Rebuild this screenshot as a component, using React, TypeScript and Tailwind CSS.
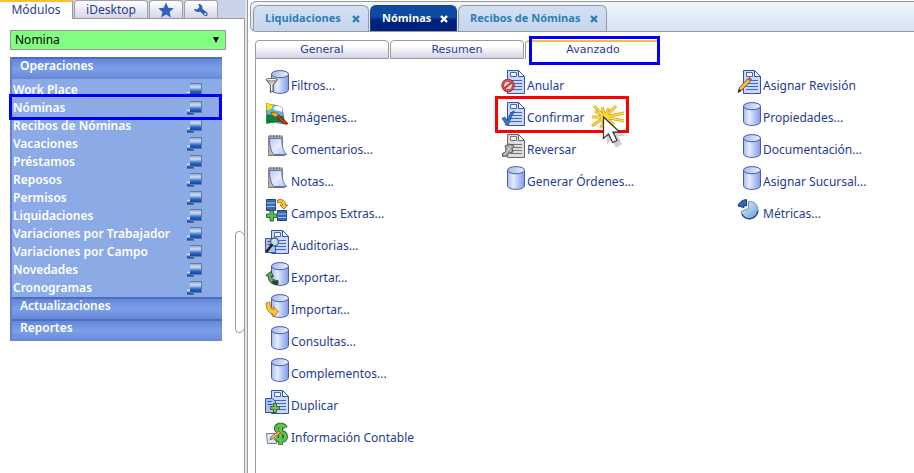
import type { ReactNode } from "react";

type IconProps = { children: ReactNode };

function Glyph({ children }: IconProps) {
  return (
    <svg viewBox="0 0 24 24" className="size-6 shrink-0" aria-hidden="true">
      {children}
    </svg>
  );
}

function Cylinder() {
  return (
    <>
      <path d="M6.500 4v15.500c0 2.200 3.800 3.900 8.500 3.900s8.500-1.700 8.500-3.900V4z" fill="url(#cyl)" stroke="#4a5f9f" />
      <ellipse cx="15" cy="4.200" rx="8.500" ry="3.600" fill="url(#lid)" stroke="#4a5f9f" />
    </>
  );
}

function Page({ gray = false }: { gray?: boolean }) {
  const edge = gray ? "#666" : "#3355a8";
  const line = gray ? "#777" : "#4468b8";
  return (
    <>
      <path d="M6.500.5h11l6 6v17h-17z" fill={gray ? "#dcdcdc" : "#c9d8fb"} stroke={edge} />
      <path d="M9.500 2.500h6v4h-6z" fill={gray ? "#eee" : "#f5f8ff"} stroke={line} />
      <path d="M17.500.5v6h6z" fill="#fff" stroke={edge} />
      <path d="M9 10.500h12M9 13.500h12M9 16.500h12M9 19.500h12" stroke={line} />
    </>
  );
}

function SmallPage() {
  return (
    <>
      <path d="M.5 8.500h7l3 3v11H.5z" fill="#a9c1f4" stroke="#3355a8" />
      <path d="M2.500 11.500h4M2.500 14.500h5" stroke="#3355a8" />
    </>
  );
}

function Pad() {
  return (
    <>
      <path d="M3.500 2h14v19.500h-14z" fill="#b9b7aa" stroke="#8a8878" />
      <path d="M4.500 4.500h12.300c0 7 1 12 4.700 16H8.800c-3-3.500-4.300-9-4.300-16z" fill="url(#sheet)" stroke="#5c72b4" />
      <path d="M5.500 1v2.500M8.500 1v2.500M11.500 1v2.500M14.500 1v2.500" stroke="#77725d" strokeWidth="1.200" />
      <path d="M4 21.500h16" stroke="#77756a" />
    </>
  );
}

const pictures: Record<string, ReactNode> = {
  cylinder: <Cylinder />,
  filter: (
    <>
      <Cylinder />
      <path d="M1 9.500c2-1 9.500-1 11.500 0l-4.300 5.500v6l-2.800 1.500V15z" fill="#cfcfcf" stroke="#4c4c4c" />
      <ellipse cx="6.700" cy="9.700" rx="5.500" ry="1.300" fill="#fff" stroke="#555" strokeWidth=".8" />
      <path d="M6.500 14.500v6" stroke="#fff" />
    </>
  ),
  image: (
    <>
      <path d="M1.500 1.500l6 1.500 5 .5 4.500 2 1.500 9 1 7.500-6-1-5-1-7 1z" fill="#5cb3ee" stroke="#666" strokeWidth=".8" />
      <path d="M1.500 1.500l6 1.500c1 3-3 5.500-6 5z" fill="#f5e400" />
      <path d="M9 5l3-1.500 5 2 .5 4c-3 .5-4-1.500-6-1-2 .5-3.500-1-2.500-3.500z" fill="#fff" />
      <path d="M1.500 13c5-2 10 3 17 1l1 8c-6-4-11-1-18-.2z" fill="#08823b" />
      <path d="M11.500 13.500l2-1L23 21.500l-1.500 1c-4-1-8-4.500-10-9z" fill="#cf321c" stroke="#4f160d" strokeWidth=".7" />
      <path d="M6 10.500l4.500-.5 3 3-2 2c-2.500.3-4-1-5.500-4.500z" fill="#f4a91b" stroke="#744500" strokeWidth=".8" />
    </>
  ),
  pad: <Pad />,
  fields: (
    <>
      <path d="M1.500 1.500h9v11h-9zM12.500 12.500h9v10h-9z" fill="#3a68ba" stroke="#1e3f80" />
      <path d="M1.500 5h9M1.500 8.500h9M12.500 16h9M12.500 19.500h9" stroke="#9cc1f0" />
      <path d="M12.500 2c5-1.500 8 1 8 5h2l-3.500 4L15 7h2.500c0-2-2-3-5-2z" fill="#ffc82e" stroke="#a16400" strokeWidth=".9" />
      <path d="M5 12.500h3.500V16H12v3.500H8.500V23H5v-3.500H1.500V16H5z" fill="#60b65b" stroke="#2f6c35" />
    </>
  ),
  audit: (
    <>
      <Page />
      <SmallPage />
      <circle cx="9.500" cy="12" r="4" fill="#b2e0f2" stroke="#5c6368" strokeWidth="1.400" />
      <path d="M6.800 15l-4.800 6" stroke="#25221f" strokeWidth="2.600" strokeLinecap="round" />
      <path d="M8 11l2-1.500" stroke="#fff" />
    </>
  ),
  exporting: (
    <>
      <Cylinder />
      <path d="M.8 13.500l5.200-4 2.500 5.300-2.300-.6c.5 3 3 4.300 6.800 4.300v4C7 22.800 3.200 20 3.200 14z" fill="#6aaa66" stroke="#1c4929" strokeWidth=".9" />
      <path d="M8.500 18c1 .7 2.500 1 4.500 1v3.200c-3 .3-5-.5-6.500-2z" fill="#214b2b" />
    </>
  ),
  importing: (
    <>
      <Cylinder />
      <path d="M1 9l4-1c0 5 1.500 7.500 4 7.500L8.500 12.500l5 5.500-5.500 5-.3-3.200C3.500 19 1 15 1 9z" fill="#ffc531" stroke="#b87412" strokeWidth=".9" />
    </>
  ),
  duplicate: (
    <>
      <Page />
      <SmallPage />
      <path d="M8.500 13.500h3v3h3v3h-3v3h-3v-3h-3v-3h3z" fill="#79bf5a" stroke="#315f2d" strokeWidth=".9" />
    </>
  ),
  accounting: (
    <>
      <path d="M1.500 11.500h11l-1 10h-9z" fill="#dce8fa" stroke="#6680ac" />
      <path
        d="M20.500 6c-1-2-3-2.800-5-2.800-4.500 0-5.500 4.500-2 6 4 1.700 7 1.500 7 5.500 0 4.500-7 5-9.500 1M15.500.8v22"
        fill="none"
        stroke="#1c672a"
        strokeWidth="4.800"
      />
      <path
        d="M20.500 6c-1-2-3-2.800-5-2.800-4.500 0-5.500 4.500-2 6 4 1.700 7 1.500 7 5.500 0 4.500-7 5-9.500 1M15.500 1.500v20.500"
        fill="none"
        stroke="#62bf50"
        strokeWidth="3"
      />
      <path d="M5 18l1-3 8-6 1.500 2-8 6z" fill="#f6bd50" stroke="#8b4f12" strokeWidth=".8" />
    </>
  ),
  cancel: (
    <>
      <Page />
      <circle cx="7" cy="15.500" r="5.300" fill="#e9d2da" stroke="#8f1c1d" strokeWidth="2.800" />
      <circle cx="7" cy="15.500" r="5.300" fill="none" stroke="#d85550" strokeWidth="1.700" />
      <path d="M3.500 18.500l7-6" stroke="#c83a36" strokeWidth="2" />
    </>
  ),
  confirm: (
    <>
      <Page />
      <path d="M1 16.500l2.800-1.300 2.400 3.300c1.500-4.500 3.300-7.500 6.300-9.500l1 .8c-3 3.700-4.500 7.700-6 12.700l-2.500.8C4 20.500 3 18.500 1 16.500z" fill="#3d76d2" stroke="#1d458f" strokeWidth=".9" />
    </>
  ),
  reverse: (
    <>
      <Page gray />
      <path d="M4 12l4-2 4 1 1 2-2 2 1 3-4 1-2 3-4.500.5v-3l3-1.500.5-3z" fill="#a3a3a3" stroke="#5a5a5a" />
      <path d="M3 21l7-9M5.500 13l4.500 4" stroke="#ddd" />
    </>
  ),
  review: (
    <>
      <Page />
      <path d="M1 22.500l1.500-5L11 8.500l2.500 2.500L5 20z" fill="#f5bd54" stroke="#694218" strokeWidth=".9" />
      <path d="M11 8.500l1.500-1.600 2.400 2.500-1.400 1.600z" fill="#c74a3c" />
      <path d="M1 22.500l1-3.500 2.300 2z" fill="#222" />
    </>
  ),
  chart: (
    <>
      <path d="M11.500 3.500c6-.5 9.500 3.500 9.500 8.500 0 5.300-4 9-8.500 9-4.500 0-7.500-3-8.500-7.500l7.500-3z" fill="url(#pie)" stroke="#5379ae" strokeWidth=".8" />
      <path d="M5 16c1.500 3.200 4 4.700 7.500 4.700 4.300 0 7.700-3.200 8.200-7.700" stroke="#2c5288" strokeWidth="1.600" fill="none" />
      <path d="M1 8c1-3.500 4-6 8.500-6.500v6.500L7 7.500v2z" fill="#3567b8" stroke="#183878" />
    </>
  ),
};

function SharedPaints() {
  return (
    <svg className="absolute size-0" aria-hidden="true">
      <defs>
        <linearGradient id="cyl">
          <stop stopColor="#a3bbf5" />
          <stop offset=".35" stopColor="#e4ebff" />
          <stop offset="1" stopColor="#7f9ce8" />
        </linearGradient>
        <linearGradient id="lid">
          <stop stopColor="#a8bbee" />
          <stop offset="1" stopColor="#e6edff" />
        </linearGradient>
        <linearGradient id="sheet" x2="1" y2="1">
          <stop stopColor="#b4c8f8" />
          <stop offset=".5" stopColor="#e6eeff" />
          <stop offset="1" stopColor="#aac1f8" />
        </linearGradient>
        <linearGradient id="pie" x2="1" y2="1">
          <stop stopColor="#e4f1ff" />
          <stop offset="1" stopColor="#6b9cd8" />
        </linearGradient>
        <linearGradient id="win" x2="0" y2="1">
          <stop stopColor="#8fabd2" />
          <stop offset=".3" stopColor="#d2e0f3" />
          <stop offset=".7" stopColor="#2d68bd" />
          <stop offset="1" stopColor="#0b48b0" />
        </linearGradient>
      </defs>
    </svg>
  );
}

function WindowIcon() {
  return (
    <svg viewBox="0 0 15 14" className="h-[14px] w-[15px] shrink-0" aria-hidden="true">
      <path d="M0 8h7v6H0z" fill="#55719c" />
      <path d="M0 8h6v5H0z" fill="url(#win)" />
      <path d="M3 0h12v12H3z" fill="#5f7ba8" />
      <path d="M3 1h11v10H3z" fill="url(#win)" />
    </svg>
  );
}

const modules = [
  "Work Place",
  "Nóminas",
  "Recibos de Nóminas",
  "Vacaciones",
  "Préstamos",
  "Reposos",
  "Permisos",
  "Liquidaciones",
  "Variaciones por Trabajador",
  "Variaciones por Campo",
  "Novedades",
  "Cronogramas",
];

const actions: [string, string][][] = [
  [
    ["Filtros...", "filter"],
    ["Imágenes...", "image"],
    ["Comentarios...", "pad"],
    ["Notas...", "pad"],
    ["Campos Extras...", "fields"],
    ["Auditorias...", "audit"],
    ["Exportar...", "exporting"],
    ["Importar...", "importing"],
    ["Consultas...", "cylinder"],
    ["Complementos...", "cylinder"],
    ["Duplicar", "duplicate"],
    ["Información Contable", "accounting"],
  ],
  [
    ["Anular", "cancel"],
    ["Confirmar", "confirm"],
    ["Reversar", "reverse"],
    ["Generar Órdenes...", "cylinder"],
  ],
  [
    ["Asignar Revisión", "review"],
    ["Propiedades...", "cylinder"],
    ["Documentación...", "cylinder"],
    ["Asignar Sucursal...", "cylinder"],
    ["Métricas...", "chart"],
  ],
];

const sideTab =
  "flex h-[18px] items-center justify-center rounded-t border border-b-0 border-[#a0a0aa] bg-linear-to-b from-white to-[#d5d5e8]";
const sectionHead =
  "flex h-[22px] w-full items-center border-t-2 border-[#4c6dc0] bg-linear-to-b from-[#6487d8] via-[#7c9fe9] to-[#6788d8] pb-[6px] pl-2 text-left text-[12px] font-semibold";

function Sidebar() {
  return (
    <aside className="relative flex w-[245px] shrink-0 flex-col bg-[#c8d3e8]">
      <nav className="flex h-[19px] text-[12px] text-[#27408b]">
        <button className="w-[73px] border-t-2 border-r border-t-[#ffbe32] border-r-[#999] bg-white pb-[2px] leading-4">
          Módulos
        </button>
        <div className="flex grow gap-px border-b border-[#999] pl-px">
          <button className={sideTab + " w-[74px]"}>iDesktop</button>
          <button className={sideTab + " w-[34px]"} aria-label="Favoritos">
            <svg viewBox="0 0 16 16" className="size-4">
              <path d="M8 .5l2.300 5.200 5.500.5-4.200 3.700 1.300 5.600L8 12.500l-4.900 3 1.300-5.600L.2 6.200l5.500-.5z" fill="#2f62b8" />
            </svg>
          </button>
          <button className={sideTab + " w-[34px]"} aria-label="Herramientas">
            <svg viewBox="0 0 16 16" className="size-4">
              <path d="M5 2c3-.5 5 2 4.300 4.700l4.200 3.300c2.700 2 .3 5.500-2.300 3.600L7 9.500C4.500 11 1.500 9.500 1 7l3.300.5L6.500 5z" fill="#2b5fb6" />
              <circle cx="12.300" cy="12" r="1" fill="#fff" />
            </svg>
          </button>
        </div>
      </nav>
      <div className="grow border-r border-[#999] bg-white pt-[11px] pl-[10px]">
        <div className="relative w-[216px]">
          <select
            aria-label="Módulo"
            className="block h-5 w-full appearance-none border border-[#999] bg-[#80ff80] pl-1 text-[12px] leading-4 text-black"
          >
            <option>Nomina</option>
          </select>
          <svg viewBox="0 0 6 6" className="pointer-events-none absolute top-[7px] right-[7px] size-[6px]">
            <path d="M0 0h6L3 6z" />
          </svg>
        </div>
        <div className="mt-[7px] w-[212px] border-l-2 border-[#6080d0] bg-[#8caae6] text-white">
          <button className={sectionHead}>Operaciones</button>
          <ul className="pt-[2px]">
            {modules.map((name) => (
              <li key={name} className="relative">
                <a href="#" className="flex h-[18px] items-center justify-between pr-5 pl-px text-[12px] font-semibold">
                  {name}
                  <WindowIcon />
                </a>
                {name === "Nóminas" && (
                  <span className="pointer-events-none absolute -top-[5px] right-0 -bottom-[3px] -left-[3px] z-10 border-3 border-[#0000ff]" />
                )}
              </li>
            ))}
          </ul>
          <button className={sectionHead}>Actualizaciones</button>
          <button className={sectionHead}>Reportes</button>
        </div>
      </div>
      <span className="absolute top-[231px] right-0 h-[102px] w-[10px] rounded-l-sm rounded-r-md border border-[#999] bg-white" />
    </aside>
  );
}

const docTab =
  "flex h-[26px] items-center justify-between rounded-t-md border border-b-0 pr-2 pl-[11px] font-['Open_Sans',sans-serif] text-[11px] font-bold";

function DocumentTabs() {
  const tabs = [
    { name: "Liquidaciones", style: "w-[116px]", active: false },
    { name: "Nóminas", style: "w-[87px]", active: true },
    { name: "Recibos de Nóminas", style: "w-[149px]", active: false },
  ];
  return (
    <nav className="mt-px flex h-[31px] items-end gap-px rounded-l-md border border-r-0 border-[#999] bg-linear-to-b from-[#eff5fa] to-[#d6e2f4] pl-[2px]">
      {tabs.map((tab) => (
        <button
          key={tab.name}
          className={
            docTab +
            " " +
            tab.style +
            (tab.active
              ? " border-[#103f91] bg-linear-to-b from-[#1049a0] from-45% to-[#00227f] to-55% text-white"
              : " border-[#999] bg-linear-to-b from-[#d2e0f2] to-[#c6d6ee] text-[#2e7db2]")
          }
        >
          {tab.name}
          <svg viewBox="0 0 8 8" className="size-2">
            <path d="M1 1l6 6M7 1L1 7" stroke="currentColor" strokeWidth="2.400" />
          </svg>
        </button>
      ))}
    </nav>
  );
}

function ClickPointer() {
  const rays = "M15 13L4 2M15 13L12 3M15 13L19 4M15 13L26 2M15 13L34 9M15 13L34 17M15 13L2 13M15 13L2 22M15 13L5 7M15 13L11 24M15 13L24 21";
  return (
    <svg viewBox="0 0 40 46" className="pointer-events-none absolute top-[2px] left-[89px] h-[46px] w-10" aria-hidden="true">
      <path d={rays} stroke="#dfa41c" strokeWidth="3" />
      <path d={rays} stroke="#f8de4c" strokeWidth="1.400" />
      <circle cx="15" cy="13" r="4" fill="#f8d840" />
      <path d="M17 19v21l5-4 4 8 6-4-4-8h7z" fill="#777" opacity=".35" />
      <path d="M13.500 13v21.500l5-4.500 4.200 8.500 4.300-2-4-8.500h6.500z" fill="#fff" stroke="#333" strokeWidth="1.200" />
    </svg>
  );
}

const innerTab = "rounded-t border border-[#999] bg-linear-to-b from-white from-30% to-[#d3d3e5]";

export default function App() {
  return (
    <div className="flex min-h-screen overflow-hidden bg-[#dfe7f3] font-['Noto_Sans',sans-serif] text-[12px] text-[#1f3c91]">
      <SharedPaints />
      <Sidebar />
      <main className="ml-[2px] min-w-0 grow border-l border-[#999] bg-white">
        <div className="pl-[2px]">
          <DocumentTabs />
          <div className="ml-[5px] pt-2">
            <nav className="flex h-[19px] gap-px font-['DejaVu_Sans',sans-serif] text-[11px] leading-4">
              <button className={innerTab + " w-[134px]"}>General</button>
              <button className={innerTab + " w-[134px]"}>Resumen</button>
              <button className="relative w-[135px] rounded-tl border-t-2 border-l border-t-[#ffbe32] border-l-[#999] pb-[3px]">
                Avanzado
                <span className="pointer-events-none absolute -top-[6px] right-0 -bottom-[6px] left-[3px] border-3 border-[#0000ff]" />
              </button>
            </nav>
            <div className="grid min-h-[414px] grid-cols-[4fr_4fr_3fr] border-l border-[#999] pt-[11px] pl-[9px]">
              {actions.map((column, index) => (
                <ul key={index} className="flex flex-col gap-2">
                  {column.map(([name, picture]) => (
                    <li key={name} className="relative">
                      <a href="#" className="flex h-6 items-end gap-[2px] leading-4 whitespace-nowrap">
                        <Glyph>{pictures[picture]}</Glyph>
                        {name}
                      </a>
                      {name === "Confirmar" && (
                        <>
                          <span className="pointer-events-none absolute -top-[6px] -left-[6px] h-[37px] w-[134px] border-3 border-[#ff0000]" />
                          <ClickPointer />
                        </>
                      )}
                    </li>
                  ))}
                </ul>
              ))}
            </div>
          </div>
        </div>
      </main>
    </div>
  );
}
